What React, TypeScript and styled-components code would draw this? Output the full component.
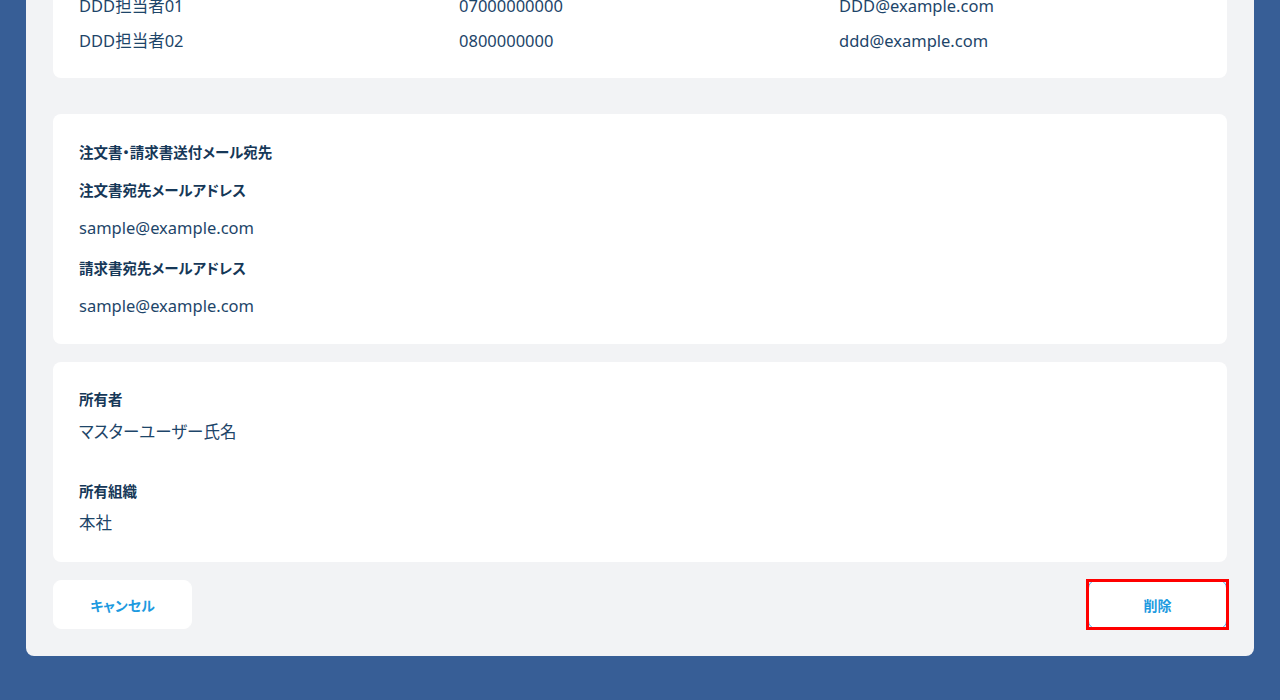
import React from "react";
import styled, { createGlobalStyle } from "styled-components";

const Global = createGlobalStyle`
  html, body { margin: 0; padding: 0; }
  body {
    background: #375e96;
    font-family: "Noto Sans", "Noto Sans CJK JP", sans-serif;
    color: #1d3f62;
  }
  * { box-sizing: border-box; }
`;

const Viewport = styled.div`
  height: 700px;
  overflow: hidden;
  display: flex;
  flex-direction: column;
  justify-content: flex-end;
  padding: 0 26px 44px 26px;
`;

const Panel = styled.main`
  flex-shrink: 0;
  background: #f2f3f5;
  border-radius: 8px;
  padding: 24px 27px 27px;
  display: flex;
  flex-direction: column;
  gap: 18px;
`;

const PageTitle = styled.h1`
  margin: 0;
  font-size: 20px;
  font-weight: 700;
  color: #1d3f62;
  font-feature-settings: "palt";
`;

const Card = styled.section<{ $pt?: number; $pb?: number; $mb?: number }>`
  background: #ffffff;
  border-radius: 8px;
  padding: ${(p) => p.$pt ?? 27}px 26px ${(p) => p.$pb ?? 27}px;
  margin-bottom: ${(p) => p.$mb ?? 0}px;
  display: flex;
  flex-direction: column;
`;

const Label = styled.div<{ $mt?: number }>`
  font-size: 14.5px;
  line-height: 20px;
  font-weight: 700;
  color: #163858;
  margin-top: ${(p) => p.$mt ?? 0}px;
  font-feature-settings: "palt";
`;

const Value = styled.div<{ $mt?: number }>`
  font-size: 16.5px;
  line-height: 24px;
  color: #1d4569;
  margin-top: ${(p) => p.$mt ?? 0}px;
  font-feature-settings: "palt";
`;

const Table = styled.div`
  display: flex;
  flex-direction: column;
  gap: 11px;
`;

const Row = styled.div`
  display: grid;
  grid-template-columns: 380px 380px 1fr;
`;

const HeadCell = styled.div`
  font-size: 14.5px;
  line-height: 20px;
  font-weight: 700;
  color: #163858;
  font-feature-settings: "palt";
`;

const Cell = styled.div`
  font-size: 16.5px;
  line-height: 24px;
  color: #1d4569;
  font-feature-settings: "palt";
`;

const ButtonRow = styled.div`
  display: flex;
  justify-content: space-between;
  align-items: center;
`;

const Button = styled.button<{ $focused?: boolean }>`
  position: relative;
  width: 139px;
  height: 49px;
  border-radius: 8px;
  background: #ffffff;
  border: ${(p) => (p.$focused ? "1px solid #5ab2ec" : "1px solid #ffffff")};
  color: #1d9ae0;
  font-family: "Noto Sans CJK JP", sans-serif;
  font-size: 14px;
  font-weight: 700;
  font-feature-settings: "palt";
  cursor: pointer;
  &::after {
    content: "";
    display: ${(p) => (p.$focused ? "block" : "none")};
    position: absolute;
    inset: -2px -3px -2px -3px;
    border: 3px solid #ff0000;
  }
`;

const contacts = [
  ["AAA担当者01", "0300000000", "aaa@example.com"],
  ["BBB担当者01", "0400000000", "bbb@example.com"],
  ["CCC担当者01", "0500000000", "ccc@example.com"],
  ["DDD担当者01", "07000000000", "DDD@example.com"],
  ["DDD担当者02", "0800000000", "ddd@example.com"],
];

export default function App() {
  return (
    <>
      <Global />
      <Viewport>
        <Panel>
          <PageTitle>取引先詳細</PageTitle>
          <Card>
            <Label>取引先名</Label>
            <Value $mt={10}>株式会社サンプル</Value>
          </Card>
          <Card $pb={25} $mb={18}>
            <Table>
              <Row>
                <HeadCell>担当者名</HeadCell>
                <HeadCell>電話番号</HeadCell>
                <HeadCell>メールアドレス</HeadCell>
              </Row>
              {contacts.map((c) => (
                <Row key={c[0] + c[1]}>
                  <Cell>{c[0]}</Cell>
                  <Cell>{c[1]}</Cell>
                  <Cell>{c[2]}</Cell>
                </Row>
              ))}
            </Table>
          </Card>
          <Card $pt={28} $pb={26}>
            <Label>注文書・請求書送付メール宛先</Label>
            <Label $mt={18}>注文書宛先メールアドレス</Label>
            <Value $mt={16}>sample@example.com</Value>
            <Label $mt={18}>請求書宛先メールアドレス</Label>
            <Value $mt={16}>sample@example.com</Value>
          </Card>
          <Card>
            <Label>所有者</Label>
            <Value $mt={11}>マスターユーザー氏名</Value>
            <Label $mt={37}>所有組織</Label>
            <Value $mt={10}>本社</Value>
          </Card>
          <ButtonRow>
            <Button>キャンセル</Button>
            <Button $focused>削除</Button>
          </ButtonRow>
        </Panel>
      </Viewport>
    </>
  );
}
